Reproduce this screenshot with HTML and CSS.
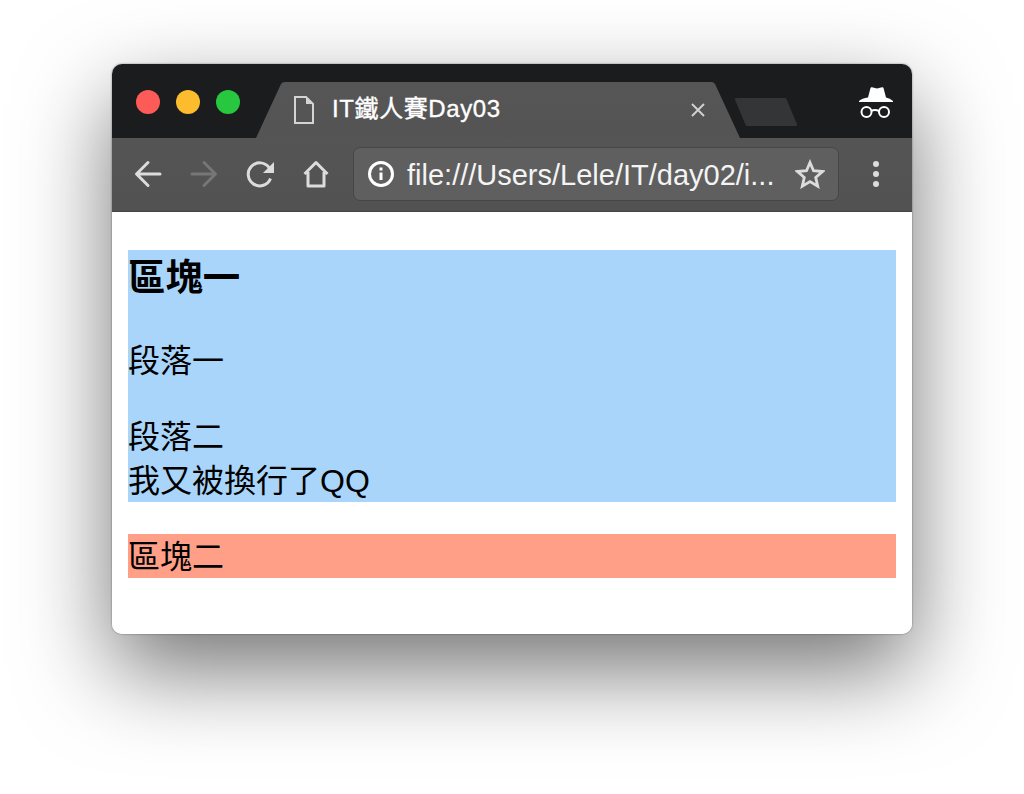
FILE: index.html
```html
<!DOCTYPE html>
<html>
<head>
    <title>IT鐵人賽Day03</title>
    <link rel="stylesheet" href="styles.css">
</head>
<body>
    <div class="window">
        <div class="titlebar">
            <div class="lights">
                <span class="light light-red"></span>
                <span class="light light-yellow"></span>
                <span class="light light-green"></span>
            </div>
            <div class="tab">
                <svg class="tab-icon" width="20" height="28" viewBox="0 0 20 28">
                    <path d="M1 1h11l7 7v19H1z" fill="none" stroke="#d4d4d4" stroke-width="2"/>
                    <path d="M12 1l7 7h-7z" fill="#d4d4d4"/>
                </svg>
                <span class="tab-title">IT鐵人賽Day03</span>
                <svg class="tab-close" width="16" height="16" viewBox="0 0 16 16">
                    <path d="M2 2l12 12M14 2L2 14" stroke="#d0d0d0" stroke-width="2"/>
                </svg>
            </div>
            <svg class="new-tab" width="64" height="30" viewBox="0 0 64 30">
                <path d="M2.500 2.500H51L61.500 27.500H13z" fill="#343536" stroke="#343536" stroke-width="3" stroke-linejoin="round"/>
            </svg>
            <svg class="incognito" width="34" height="34" viewBox="0 0 34 34">
                <path d="M9 11.500L11.500 2q.3-1 1.500-.7l5 1.200 5-1.200q1.200-.3 1.500.7L27 11.500q4 .8 7 3.500v1H0v-1q3-2.700 9-3.500z" fill="#fff"/>
                <circle cx="7.500" cy="26" r="5" fill="none" stroke="#fff" stroke-width="2"/>
                <circle cx="25" cy="26" r="5" fill="none" stroke="#fff" stroke-width="2"/>
                <path d="M12 25q4-2 8 0" fill="none" stroke="#fff" stroke-width="2"/>
            </svg>
        </div>
        <div class="toolbar">
            <svg class="tool" width="28" height="28" viewBox="0 0 28 28">
                <path d="M26 14H3M14 2.500L2.500 14 14 25.500" fill="none" stroke="#dcdcdc" stroke-width="3" stroke-linecap="round" stroke-linejoin="round"/>
            </svg>
            <svg class="tool" width="28" height="28" viewBox="0 0 28 28">
                <path d="M2 14h23M14 2.500L25.500 14 14 25.500" fill="none" stroke="#767676" stroke-width="3" stroke-linecap="round" stroke-linejoin="round"/>
            </svg>
            <svg class="tool" width="28" height="28" viewBox="0 0 28 28">
                <path d="M24.500 18.500a11.500 11.500 0 1 1-1.500-11" fill="none" stroke="#dcdcdc" stroke-width="3"/>
                <path d="M28 2v11H17z" fill="#dcdcdc"/>
            </svg>
            <svg class="tool" width="28" height="28" viewBox="0 0 28 28">
                <path d="M2.500 14L14 2.500 25.500 14M6 12v14h16V12" fill="none" stroke="#dcdcdc" stroke-width="3" stroke-linejoin="round"/>
            </svg>
            <div class="omnibox">
                <svg class="info" width="28" height="28" viewBox="0 0 28 28">
                    <circle cx="14" cy="14" r="11.500" fill="none" stroke="#fff" stroke-width="3"/>
                    <path d="M12.500 12.500h3V20h-3zM12.500 7.500h3v3h-3z" fill="#fff"/>
                </svg>
                <span class="url">file:///Users/Lele/IT/day02/i...</span>
                <svg class="star" width="30" height="30" viewBox="0 0 30 30">
                    <path d="M15 3.500l3.500 8.200 9 .8-6.800 5.900 2 8.800-7.700-4.600-7.700 4.600 2-8.800-6.800-5.900 9-.8z" fill="none" stroke="#dcdcdc" stroke-width="2.800"/>
                </svg>
            </div>
            <div class="menu">
                <span class="dot"></span>
                <span class="dot"></span>
                <span class="dot"></span>
            </div>
        </div>
        <div class="page">
            <div class="block-one">
                <h3>區塊一</h3>
                <p>段落一</p>
                <p>段落二<br>我又被換行了<span class="latin">QQ</span></p>
            </div>
            <div class="block-two">區塊二</div>
        </div>
    </div>
</body>
</html>
```
FILE: styles.css
```css
body {
    margin: 0;
    padding: 64px 112px 160px;
    background: #fff;
    font-family: "Liberation Sans", "Noto Sans CJK TC", sans-serif;
}

.window {
    width: 800px;
    height: 570px;
    border-radius: 10px;
    overflow: hidden;
    box-shadow: 0 36px 90px rgba(0, 0, 0, 0.55), 0 0 2px rgba(0, 0, 0, 0.5);
}

.titlebar {
    display: flex;
    height: 74px;
    background: #1b1c1e;
}

.lights {
    display: flex;
    gap: 16px;
    margin: 26px 0 0 24px;
}

.light {
    width: 24px;
    height: 24px;
    border-radius: 50%;
}

.light-red {
    background: #fc5b57;
}

.light-yellow {
    background: #fdbb2e;
}

.light-green {
    background: #27c840;
}

.tab {
    display: flex;
    align-items: center;
    width: 484px;
    height: 56px;
    margin: 18px 0 0 16px;
    padding: 0 34px 0 38px;
    box-sizing: border-box;
    background: linear-gradient(#565656, #545454);
    clip-path: path("M0 56 L25 2 Q26 0 29 0 H455 Q458 0 459 2 L484 56 Z");
}

.tab-icon {
    margin: 0 18px 0 0;
}

.tab-title {
    flex: 1;
    margin-bottom: 2px;
    color: #fff;
    font-size: 24px;
    line-height: 28px;
    letter-spacing: 0.6px;
    -webkit-text-stroke: 0.35px #fff;
}

.new-tab {
    margin: 33px 0 0 -6px;
}

.incognito {
    margin: 22px 19px 0 auto;
}

.toolbar {
    display: flex;
    align-items: center;
    height: 74px;
    box-sizing: border-box;
    padding: 0 22px 1px;
    gap: 28px;
    background: linear-gradient(#555, #525252);
    border-bottom: 1px solid #444;
}

.omnibox {
    display: flex;
    align-items: center;
    width: 486px;
    height: 54px;
    box-sizing: border-box;
    margin-left: -5px;
    padding: 0 13px 0 13px;
    background: #5f5f5f;
    border: 1px solid #464646;
    border-radius: 7px;
}

.url {
    flex: 1;
    margin: 2px 0 0 12px;
    color: #f4f4f4;
    font-size: 29px;
    white-space: nowrap;
}

.menu {
    display: flex;
    flex-direction: column;
    gap: 4px;
    margin-left: 6px;
}

.dot {
    width: 6px;
    height: 6px;
    border-radius: 50%;
    background: #dcdcdc;
}

.page {
    height: 422px;
    padding: 0 16px;
    background: #fff;
    color: #000;
    font-family: "Noto Sans", "Noto Sans CJK TC", sans-serif;
    font-size: 32px;
    line-height: 44px;
    overflow: hidden;
}

.latin {
    font-family: "Liberation Sans", sans-serif;
    line-height: 1;
}

.block-one {
    background: #a9d5fb;
}

.block-two {
    background: #ff9f88;
}

h3 {
    margin: 38px 0 37px;
    font-family: "Noto Sans CJK TC", sans-serif;
    font-size: 37.440px;
    line-height: 51px;
}

p {
    margin: 32px 0;
}
```
